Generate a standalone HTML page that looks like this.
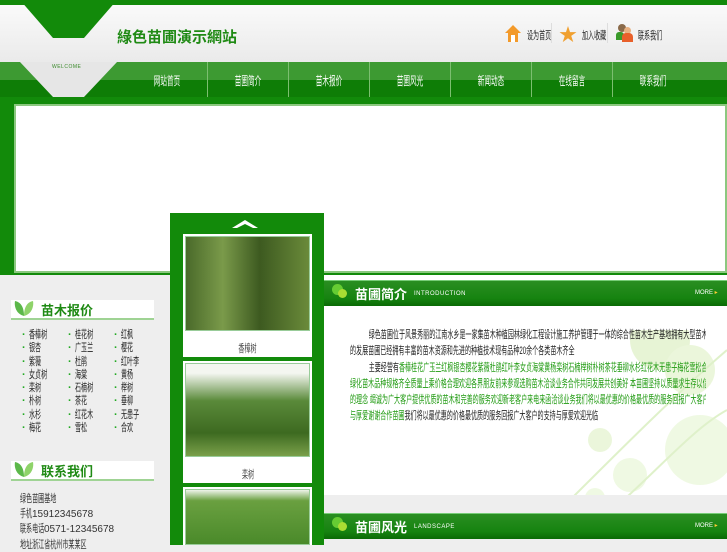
<!DOCTYPE html>
<html><head><meta charset="utf-8"><style>
*{margin:0;padding:0;box-sizing:border-box}
body{width:727px;height:545px;overflow:hidden;background:#eee;font-family:"Liberation Sans","Noto Sans CJK SC",sans-serif;position:relative}
.abs{position:absolute}
.t{font-size:11px;color:#222}
.s{display:inline-block;transform:scaleX(.55);transform-origin:left center;white-space:nowrap}
.c{display:inline-block;transform:scaleX(.55);transform-origin:center center;white-space:nowrap}
.para{position:absolute;left:350px;width:647px;transform:scaleX(.55);transform-origin:left top;font-size:11px;line-height:16.3px;color:#222}
.para div{white-space:nowrap;overflow:hidden;height:16.3px}
.g{color:#1f9a10}
</style></head><body>
<!-- header -->
<div class="abs" style="left:0;top:0;width:727px;height:5px;background:#128a0a"></div>
<div class="abs" style="left:0;top:5px;width:727px;height:57px;background:linear-gradient(#fafafa,#eaeaea)"></div>
<div class="abs" style="left:0;top:62px;width:727px;height:18px;background:#3d9a32"></div>
<div class="abs" style="left:0;top:80px;width:727px;height:17px;background:#0e7d06"></div>
<svg class="abs" style="left:0;top:0" width="130" height="100">
<polygon points="20,0 117,0 84,38 53,38" fill="#128a0a"/>
<polygon points="20,62 117,62 84,97 53,97" fill="#e6e6e6"/>
</svg>
<div class="abs" style="left:52px;top:64px;font-size:5px;color:#3a8a2a;letter-spacing:.5px">WELCOME</div>
<div class="abs" style="left:117px;top:26px;font-size:15px;font-weight:bold;color:#1f8a14">綠色苗圃演示網站</div>
<svg class="abs" style="left:504px;top:24px" width="18" height="19"><polygon points="9,1 1,9 4,9 4,18 14,18 14,9 17,9" fill="#f39a2a"/><rect x="7" y="11" width="4" height="7" fill="#fff"/></svg>
<div class="abs t" style="left:527px;top:27px;font-size:11px"><span class="s">设为首页</span></div>
<div class="abs" style="left:551px;top:23px;width:1px;height:20px;background:#ddd"></div>
<div class="abs" style="left:559px;top:21px;color:#f0a030;font-size:18px">★</div>
<div class="abs t" style="left:582px;top:27px;font-size:11px"><span class="s">加入收藏</span></div>
<div class="abs" style="left:607px;top:23px;width:1px;height:20px;background:#ddd"></div>
<div class="abs" style="left:618px;top:24px;width:8px;height:8px;border-radius:50%;background:#8a6a4a"></div>
<div class="abs" style="left:616px;top:32px;width:8px;height:8px;border-radius:3px 3px 0 0;background:#3a9a2a"></div>
<div class="abs" style="left:624px;top:27px;width:7px;height:7px;border-radius:50%;background:#e8b080"></div>
<div class="abs" style="left:622px;top:33px;width:11px;height:9px;border-radius:4px 4px 0 0;background:#e8602a"></div>
<div class="abs t" style="left:638px;top:27px;font-size:11px"><span class="s">联系我们</span></div>
<div class="abs" style="left:127px;top:62px;width:600px;height:35px;display:flex;color:#fff;font-size:12px">
<div style="width:81px;text-align:center;line-height:38px;border-right:1px solid #7cbf70"><span class="c">网站首页</span></div>
<div style="width:81px;text-align:center;line-height:38px;border-right:1px solid #7cbf70"><span class="c">苗圃简介</span></div>
<div style="width:81px;text-align:center;line-height:38px;border-right:1px solid #7cbf70"><span class="c">苗木报价</span></div>
<div style="width:81px;text-align:center;line-height:38px;border-right:1px solid #7cbf70"><span class="c">苗圃风光</span></div>
<div style="width:81px;text-align:center;line-height:38px;border-right:1px solid #7cbf70"><span class="c">新闻动态</span></div>
<div style="width:81px;text-align:center;line-height:38px;border-right:1px solid #7cbf70"><span class="c">在线留言</span></div>
<div style="width:81px;text-align:center;line-height:38px"><span class="c">联系我们</span></div>
</div>
<!-- banner -->
<div class="abs" style="left:0;top:97px;width:727px;height:178px;background:#128a0a"></div>
<div class="abs" style="left:14px;top:104px;width:713px;height:169px;background:#fff;border:2px solid #8bc87f"></div>
<!-- left sidebar -->
<div class="abs" style="left:0;top:275px;width:170px;height:270px;background:#eee"></div>
<div class="abs" style="left:11px;top:300px;width:143px;height:20px;background:#fff;border-bottom:2px solid #9fd394"></div>
<svg class="abs" style="left:13px;top:298px" width="22" height="20"><path d="M11,18 C3,16 1,8 2,3 C7,4 11,8 11,18 Z" fill="#5cb84a"/><path d="M11,18 C19,16 21,8 20,3 C15,4 11,8 11,18 Z" fill="#8fd36a"/></svg>
<div class="abs" style="left:41px;top:300px;font-size:13px;font-weight:bold;color:#1f8a14">苗木报价</div>
<div class="abs t" style="left:22px;top:329px;width:140px;display:grid;grid-template-columns:46px 46px 46px;line-height:13.3px;font-size:11px">
<span><b style="color:#2a2">·</b> <span class="s">香樟树</span></span><span><b style="color:#2a2">·</b> <span class="s">桂花树</span></span><span><b style="color:#2a2">·</b> <span class="s">红枫</span></span>
<span><b style="color:#2a2">·</b> <span class="s">银杏</span></span><span><b style="color:#2a2">·</b> <span class="s">广玉兰</span></span><span><b style="color:#2a2">·</b> <span class="s">樱花</span></span>
<span><b style="color:#2a2">·</b> <span class="s">紫薇</span></span><span><b style="color:#2a2">·</b> <span class="s">杜鹃</span></span><span><b style="color:#2a2">·</b> <span class="s">红叶李</span></span>
<span><b style="color:#2a2">·</b> <span class="s">女贞树</span></span><span><b style="color:#2a2">·</b> <span class="s">海棠</span></span><span><b style="color:#2a2">·</b> <span class="s">黄杨</span></span>
<span><b style="color:#2a2">·</b> <span class="s">栾树</span></span><span><b style="color:#2a2">·</b> <span class="s">石楠树</span></span><span><b style="color:#2a2">·</b> <span class="s">榉树</span></span>
<span><b style="color:#2a2">·</b> <span class="s">朴树</span></span><span><b style="color:#2a2">·</b> <span class="s">茶花</span></span><span><b style="color:#2a2">·</b> <span class="s">垂柳</span></span>
<span><b style="color:#2a2">·</b> <span class="s">水杉</span></span><span><b style="color:#2a2">·</b> <span class="s">红花木</span></span><span><b style="color:#2a2">·</b> <span class="s">无患子</span></span>
<span><b style="color:#2a2">·</b> <span class="s">梅花</span></span><span><b style="color:#2a2">·</b> <span class="s">雪松</span></span><span><b style="color:#2a2">·</b> <span class="s">合欢</span></span>
</div>
<div class="abs" style="left:11px;top:461px;width:143px;height:20px;background:#fff;border-bottom:2px solid #9fd394"></div>
<svg class="abs" style="left:13px;top:459px" width="22" height="20"><path d="M11,18 C3,16 1,8 2,3 C7,4 11,8 11,18 Z" fill="#5cb84a"/><path d="M11,18 C19,16 21,8 20,3 C15,4 11,8 11,18 Z" fill="#8fd36a"/></svg>
<div class="abs" style="left:41px;top:461px;font-size:13px;font-weight:bold;color:#1f8a14">联系我们</div>
<div class="abs" style="left:20px;top:492px;font-size:10px;line-height:14.5px;color:#333">
<div style="font-size:11px"><span class="s">绿色苗圃基地</span></div>
<div><span class="s" style="font-size:11px;margin-right:-10px">手机</span>15912345678</div>
<div><span class="s" style="font-size:11px;margin-right:-20px">联系电话</span>0571-12345678</div>
<div style="font-size:11px"><span class="s">地址浙江省杭州市某某区</span></div>
</div>
<!-- middle column -->
<div class="abs" style="left:170px;top:213px;width:154px;height:332px;background:#128a0a"></div>
<svg class="abs" style="left:230px;top:218px" width="30" height="12"><polygon points="2,10 15,2 28,10 23,10 15,6 7,10" fill="#fff"/></svg>
<div class="abs" style="left:183px;top:234px;width:129px;height:123px;background:#fff"></div>
<div class="abs" style="left:185px;top:236px;width:125px;height:95px;background:linear-gradient(90deg,#4a6a2a,#7a9a4a 30%,#3d5a20 60%,#6a8a3a);border:1px solid #9c9"></div>
<div class="abs t" style="left:183px;top:340px;width:129px;text-align:center;font-size:11px;color:#444"><span class="c">香樟树</span></div>
<div class="abs" style="left:183px;top:361px;width:129px;height:122px;background:#fff"></div>
<div class="abs" style="left:185px;top:363px;width:125px;height:94px;background:linear-gradient(#f4f6f0 10%,#5a8a3a 40%,#3d6a20 75%,#7aa04a);border:1px solid #9c9"></div>
<div class="abs t" style="left:183px;top:466px;width:129px;text-align:center;font-size:11px;color:#444"><span class="c">栾树</span></div>
<div class="abs" style="left:183px;top:487px;width:129px;height:58px;background:#fff"></div>
<div class="abs" style="left:185px;top:489px;width:125px;height:56px;background:linear-gradient(#eef4ea,#6aa040 20%,#4a8a2a);border:1px solid #9c9"></div>
<!-- right content -->
<div class="abs" style="left:324px;top:275px;width:403px;height:270px;background:#fff"></div>
<svg class="abs" style="left:540px;top:330px" width="187" height="200" opacity=".35">
<circle cx="120" cy="10" r="30" fill="#bde08a"/><circle cx="150" cy="40" r="25" fill="#c8e89a"/><circle cx="160" cy="120" r="35" fill="#d4eeb0"/><circle cx="90" cy="145" r="17" fill="#d4eeb0"/><circle cx="55" cy="168" r="10" fill="#d4eeb0"/><circle cx="60" cy="110" r="12" fill="#c8e89a"/>
<path d="M20,180 C80,120 140,60 187,20 M60,190 C110,150 150,100 187,80" stroke="#a6d86a" stroke-width="2" fill="none"/>
</svg>
<div class="abs" style="left:324px;top:280px;width:403px;height:26px;background:linear-gradient(#2a8e22,#168310 70%,#0a6a05);border-top:1px solid #7c7"></div>
<div class="abs" style="left:332px;top:284px;width:11px;height:11px;border-radius:50%;background:#6c3"></div>
<div class="abs" style="left:338px;top:289px;width:9px;height:9px;border-radius:50%;background:#ad3"></div>
<div class="abs" style="left:355px;top:284px;color:#fff;font-weight:bold;font-size:13px">苗圃简介</div>
<div class="abs" style="left:414px;top:291px;color:#fff;font-size:6px;letter-spacing:.5px">INTRODUCTION</div>
<div class="abs" style="left:695px;top:289px;color:#fff;font-size:6px">MORE <span style="color:#fc3">▸</span></div>
<div class="para" style="top:327px">
<div style="padding-left:34px">绿色苗圃位于风景秀丽的江南水乡是一家集苗木种植园林绿化工程设计施工养护管理于一体的综合性苗木生产基地拥有大型苗木基地多处经过多年</div>
<div>的发展苗圃已经拥有丰富的苗木资源和先进的种植技术现有品种<span style="font-family:'Liberation Sans'">20</span>余个各类苗木齐全</div>
<div style="padding-left:34px">主要经营有<span class="g">香樟桂花广玉兰红枫银杏樱花紫薇杜鹃红叶李女贞海棠黄杨栾树石楠榉树朴树茶花垂柳水杉红花木无患子梅花雪松合欢等多种</span></div>
<div class="g">绿化苗木品种规格齐全质量上乘价格合理欢迎各界朋友前来参观选购苗木洽谈业务合作共同发展共创美好 本苗圃坚持以质量求生存以信誉求发展</div>
<div class="g">的理念 竭诚为广大客户提供优质的苗木和完善的服务欢迎新老客户来电来函洽谈业务我们将以最优惠的价格最优质的服务回报广大客户的支持</div>
<div><span class="g">与厚爱谢谢合作苗圃</span>我们将以最优惠的价格最优质的服务回报广大客户的支持与厚爱欢迎光临</div>
</div>
<div class="abs" style="left:324px;top:495px;width:403px;height:18px;background:#eee"></div>
<div class="abs" style="left:324px;top:513px;width:403px;height:26px;background:linear-gradient(#2a8e22,#168310 70%,#0a6a05);border-top:1px solid #7c7"></div>
<div class="abs" style="left:332px;top:517px;width:11px;height:11px;border-radius:50%;background:#6c3"></div>
<div class="abs" style="left:338px;top:522px;width:9px;height:9px;border-radius:50%;background:#ad3"></div>
<div class="abs" style="left:355px;top:517px;color:#fff;font-weight:bold;font-size:13px">苗圃风光</div>
<div class="abs" style="left:414px;top:524px;color:#fff;font-size:6px;letter-spacing:.5px">LANDSCAPE</div>
<div class="abs" style="left:695px;top:522px;color:#fff;font-size:6px">MORE <span style="color:#fc3">▸</span></div>
<div class="abs" style="left:324px;top:539px;width:403px;height:6px;background:#eee"></div>
</body></html>
